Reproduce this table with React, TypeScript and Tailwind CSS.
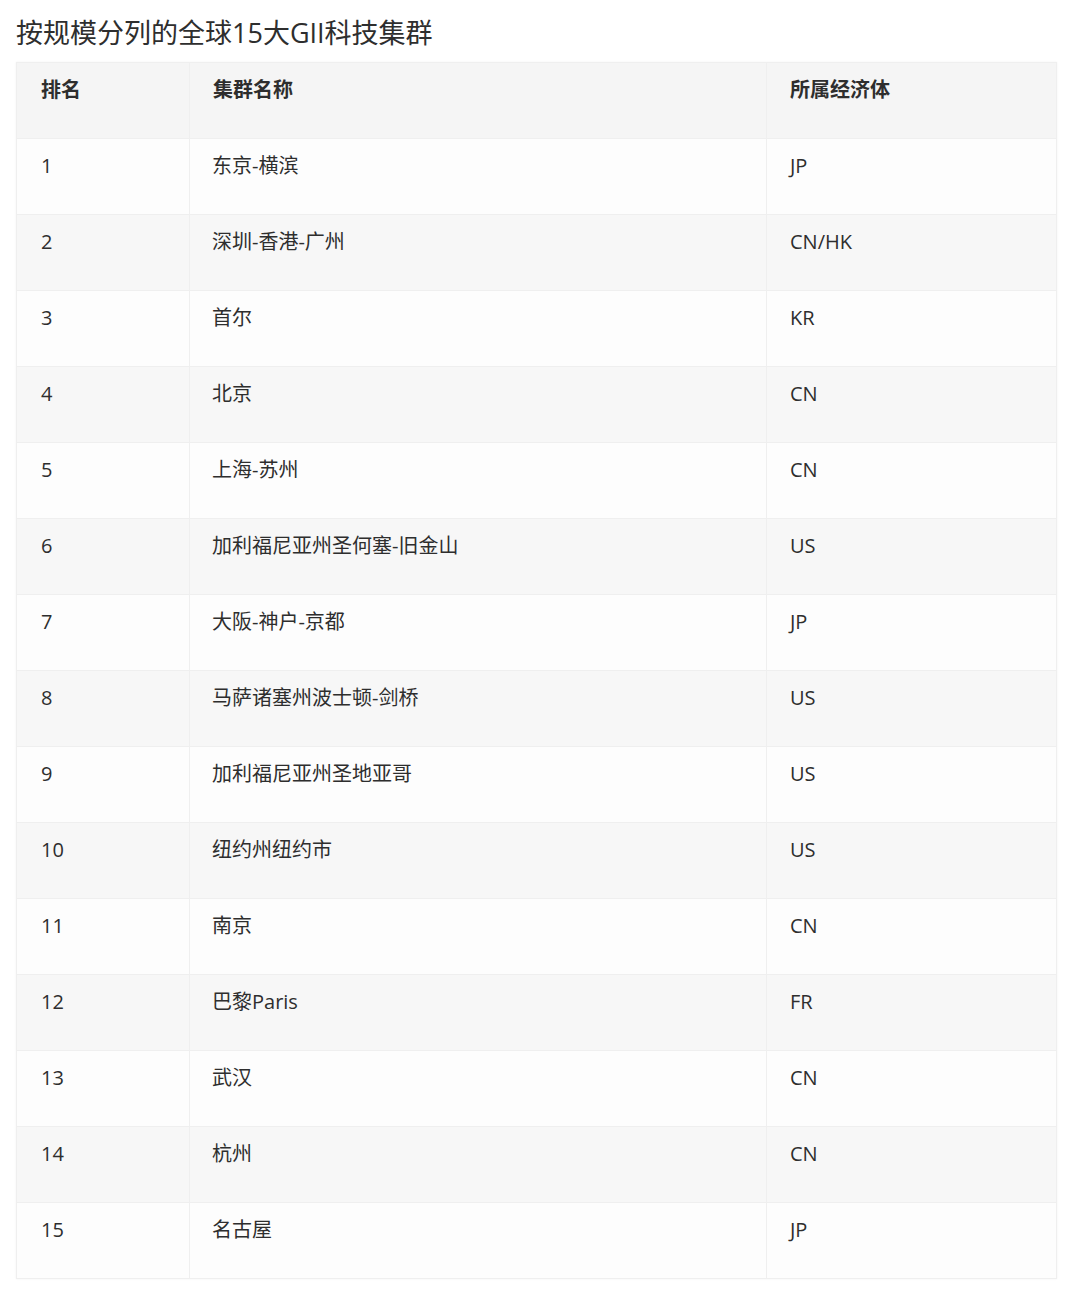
const rows: [string, string, string][] = [
  ['1', '东京-横滨', 'JP'],
  ['2', '深圳-香港-广州', 'CN/HK'],
  ['3', '首尔', 'KR'],
  ['4', '北京', 'CN'],
  ['5', '上海-苏州', 'CN'],
  ['6', '加利福尼亚州圣何塞-旧金山', 'US'],
  ['7', '大阪-神户-京都', 'JP'],
  ['8', '马萨诸塞州波士顿-剑桥', 'US'],
  ['9', '加利福尼亚州圣地亚哥', 'US'],
  ['10', '纽约州纽约市', 'US'],
  ['11', '南京', 'CN'],
  ['12', '巴黎Paris', 'FR'],
  ['13', '武汉', 'CN'],
  ['14', '杭州', 'CN'],
  ['15', '名古屋', 'JP'],
];

export default function App() {
  return (
    <div className="min-h-[1294px] bg-white px-4 pt-[14px] text-[#2e2e2e] font-['Open_Sans','Noto_Sans_CJK_SC',sans-serif]">
      {/* Title */}
      <h1 className="text-[27px] leading-[38px] font-normal">按规模分列的全球15大GII科技集群</h1>

      {/* Table */}
      <table className="mt-[10px] w-[1040px] border-collapse text-[20px] table-fixed shadow-[0_0_2px_rgba(0,0,0,0.06)]">
        <colgroup>
          <col className="w-[173px]" />
          <col className="w-[577px]" />
          <col className="w-[290px]" />
        </colgroup>
        <thead>
          <tr className="h-[76px] bg-[#f5f5f5]">
            <th className="border border-[#efefef] px-6 pt-[14px] align-top text-left font-semibold leading-[26px]">排名</th>
            <th className="border border-[#efefef] px-[23px] pt-[14px] align-top text-left font-semibold leading-[26px]">集群名称</th>
            <th className="border border-[#efefef] px-[23px] pt-[14px] align-top text-left font-semibold leading-[26px]">所属经济体</th>
          </tr>
        </thead>
        <tbody>
          {rows.map(([rank, name, eco], i) => (
            <tr key={rank} className={i % 2 === 0 ? 'h-[76px] bg-[#fdfdfd]' : 'h-[76px] bg-[#f7f7f7]'}>
              <td className="border border-[#efefef] px-6 pt-[14px] align-top leading-[26px]">{rank}</td>
              <td className="border border-[#efefef] px-[22px] pt-[14px] align-top leading-[26px]">{name}</td>
              <td className="border border-[#efefef] px-[23px] pt-[14px] align-top leading-[26px]">{eco}</td>
            </tr>
          ))}
        </tbody>
      </table>
    </div>
  );
}
